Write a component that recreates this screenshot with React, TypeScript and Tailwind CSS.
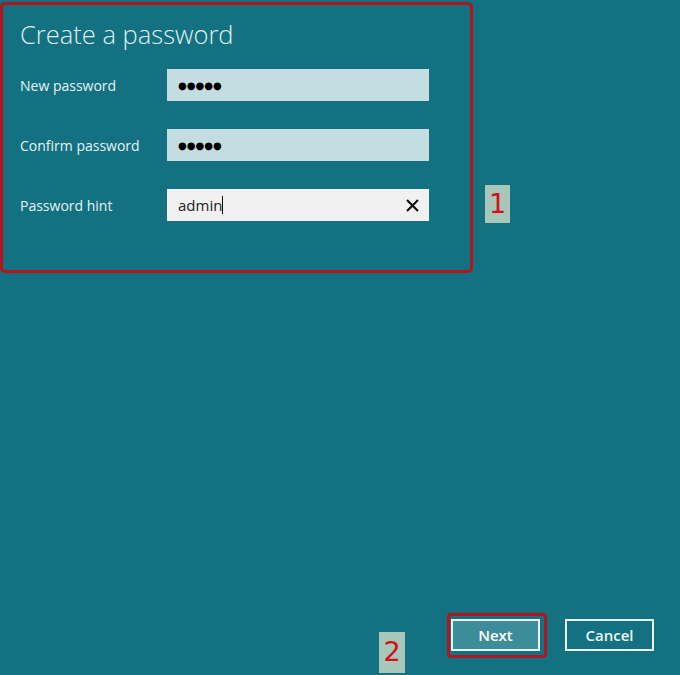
import React from "react";

const font = { fontFamily: '"Open Sans", "Noto Sans", sans-serif' };
const badgeFont = { fontFamily: '"DejaVu Sans", sans-serif' };

const Dots = () => (
  <span className="text-[10px] tracking-[0px] text-black" style={{ fontFamily: '"DejaVu Sans", sans-serif' }}>
    ●●●●●
  </span>
);

const Row = ({ label, children, bg }: { label: string; children: React.ReactNode; bg: string }) => (
  <div className="flex items-center h-[32px]">
    <div className="w-[147px] text-[14px] text-[#e6f3f4]">{label}</div>
    <div className={`w-[262px] h-[32px] flex items-center pl-[11px] pr-[9px] ${bg}`}>{children}</div>
  </div>
);

export default function App() {
  return (
    <div className="w-[680px] h-[675px] bg-[#137182] flex flex-col overflow-hidden" style={font}>
      {/* form + badge 1 */}
      <div className="flex items-start pt-[2px]">
        <div className="w-[473px] h-[271px] border-[3px] border-[#b3151c] rounded-[5px] pl-[17px] pt-[13px]">
          <h1 className="text-[25.5px] font-light text-[#dff0f2] leading-[32px]">Create a password</h1>
          <div className="flex flex-col gap-[28px] mt-[19px]">
            <Row label="New password" bg="bg-[#c3dde0]">
              <Dots />
            </Row>
            <Row label="Confirm password" bg="bg-[#c3dde0]">
              <Dots />
            </Row>
            <Row label="Password hint" bg="bg-[#f1f1f1]">
              <span className="text-[15px] text-[#222] leading-none">admin</span>
              <span className="w-px h-[18px] bg-black" />
              <svg className="ml-auto" width="15" height="15" viewBox="0 0 15 15">
                <path d="M2 2 L13 13 M13 2 L2 13" stroke="#111" strokeWidth="2.2" />
              </svg>
            </Row>
          </div>
        </div>
        <div
          className="ml-[12px] mt-[183px] w-[25px] h-[38px] bg-[#a9c6bb] flex items-center justify-center text-[27px] text-[#d0121a]"
          style={badgeFont}
        >
          1
        </div>
      </div>

      {/* buttons + badge 2 */}
      <div className="mt-auto h-[62px] flex items-start pl-[379px]">
        <div
          className="mt-[19px] w-[26px] h-[41px] bg-[#a9c6bb] flex items-center justify-center text-[27px] text-[#d0121a]"
          style={badgeFont}
        >
          2
        </div>
        <div className="ml-[42px] w-[100px] h-[45px] border-[3px] border-[#b3151c] rounded-[4px] pl-[1px] pt-[3px]">
          <button className="w-[89px] h-[32px] border-2 border-[#e8f4f5] bg-[#3c8c99] text-white text-[15px] font-semibold">
            Next
          </button>
        </div>
        <button className="ml-[18px] mt-[6px] w-[89px] h-[32px] border-2 border-[#e8f4f5] text-[#eef7f8] text-[15px] font-semibold">
          Cancel
        </button>
      </div>
    </div>
  );
}
